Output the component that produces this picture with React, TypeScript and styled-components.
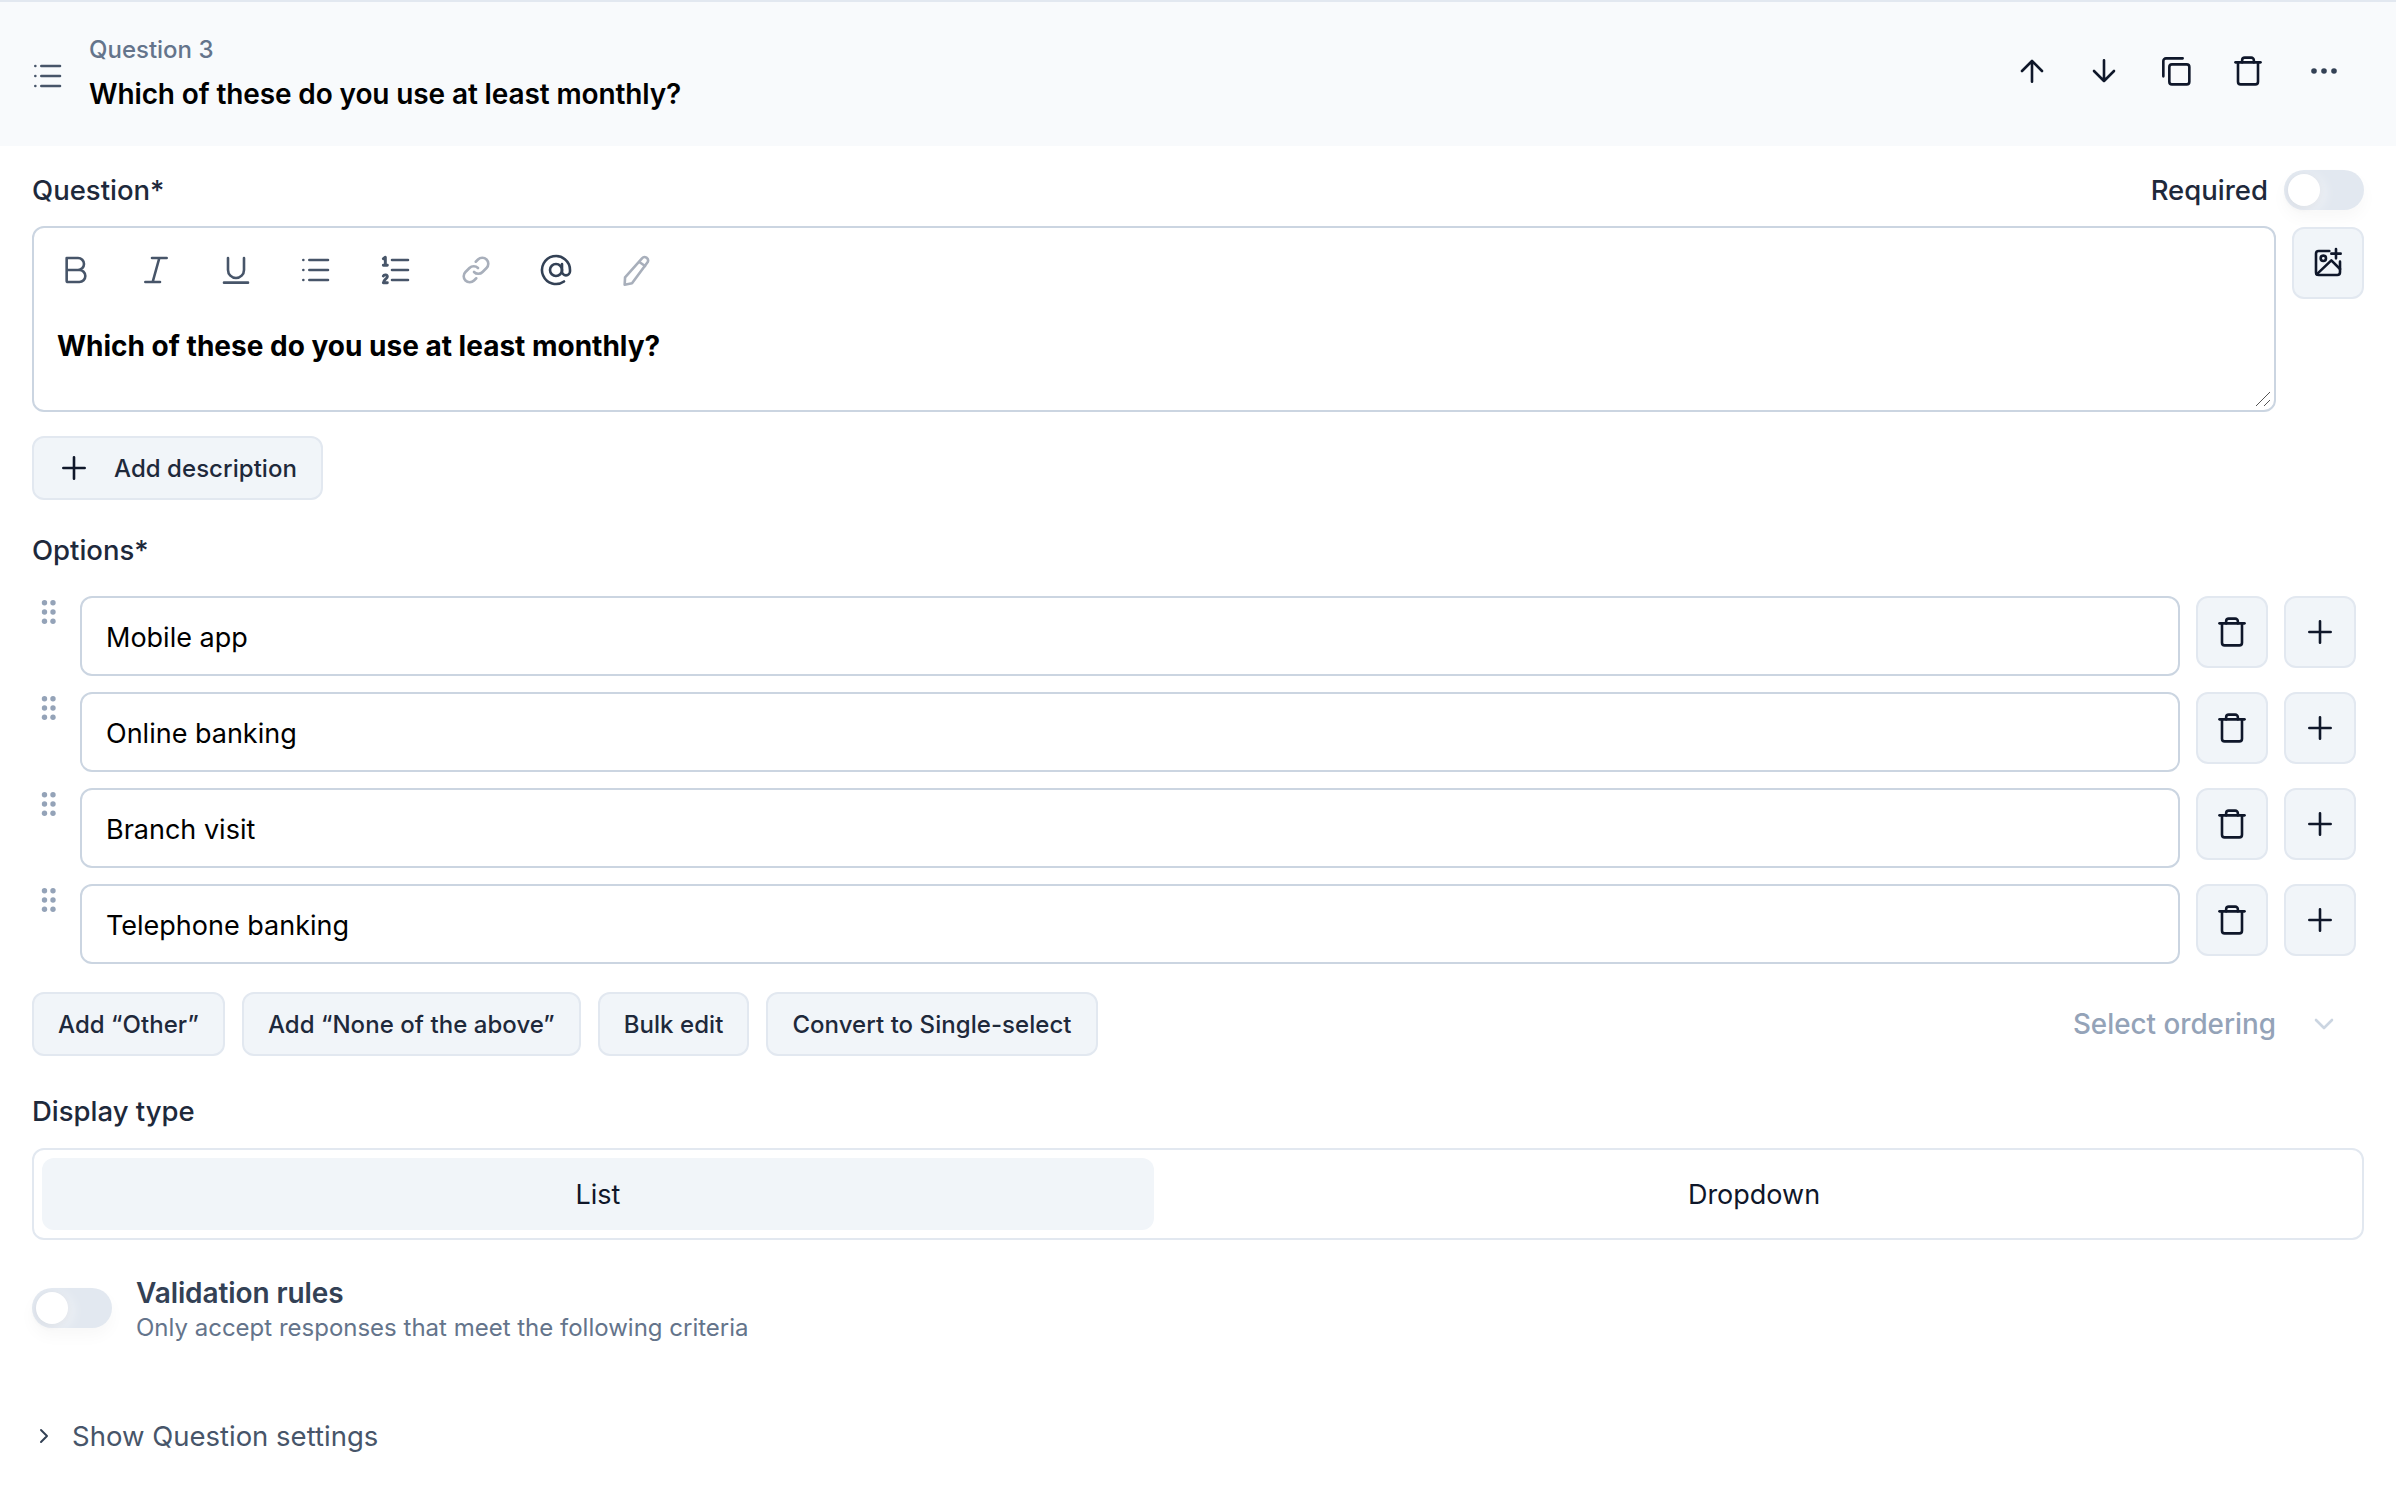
import React from "react";
import styled, { createGlobalStyle } from "styled-components";

const GlobalStyle = createGlobalStyle`
  html, body {
    margin: 0;
    background: #ffffff;
    font-family: Inter, "Noto Sans", sans-serif;
    -webkit-font-smoothing: antialiased;
  }
  * { box-sizing: border-box; }
`;

type IconProps = { color?: string; size?: number };

const Icon = ({ color = "#0f172a", size = 32, children }: IconProps & { children: React.ReactNode }) => (
  <svg
    width={size}
    height={size}
    viewBox="0 0 24 24"
    fill="none"
    stroke={color}
    strokeWidth="1.95"
    strokeLinecap="round"
    strokeLinejoin="round"
  >
    {children}
  </svg>
);

const TrashIcon = (p: IconProps) => (
  <Icon {...p}>
    <path d="M2.600 5.500h18.800" />
    <path d="M7.600 5.500V4a2 2 0 0 1 2-2h4.800a2 2 0 0 1 2 2v1.500" />
    <path d="M4.500 5.500V20a2 2 0 0 0 2 2h11a2 2 0 0 0 2-2V5.500" />
  </Icon>
);
const PlusIcon = (p: IconProps) => (
  <Icon {...p}>
    <path d="M12 4v16M4 12h16" />
  </Icon>
);
const UpIcon = (p: IconProps) => (
  <Icon {...p}>
    <path d="M12 20V4.500M4.500 12 12 4.500l7.500 7.500" />
  </Icon>
);
const DownIcon = (p: IconProps) => (
  <Icon {...p}>
    <path d="M12 4v15.500M4.500 12l7.500 7.500 7.500-7.500" />
  </Icon>
);
const CopyIcon = (p: IconProps) => (
  <Icon {...p}>
    <rect x="7" y="7" width="15" height="15" rx="2" />
    <path d="M17 2.500H4.500a2 2 0 0 0-2 2V16" />
  </Icon>
);
const ListIcon = ({ color = "#475569", size = 32 }: IconProps) => (
  <Icon color={color} size={size}>
    <path d="M7 4.500h14M7 12h14M7 19.500h14" />
    <path d="M2.500 4.500h.01M2.500 12h.01M2.500 19.500h.01" />
  </Icon>
);
const NumberedIcon = (p: IconProps) => (
  <Icon {...p}>
    <path d="M9 4.500h12M9 12h12M9 19.500h12" />
    <path d="M2.500 3.500 4 2.500v6M2.500 8.500H5.500" strokeWidth="2.200" />
    <path d="M2.500 16.500c.5-1.200 3-1.200 3 .5 0 1.300-3 2.500-3 4.500h3" strokeWidth="2.200" />
  </Icon>
);
const BoldIcon = (p: IconProps) => (
  <Icon {...p}>
    <path d="M5 3h8.500a4.500 4.500 0 0 1 0 9H5zM5 12h9.500a4.500 4.500 0 0 1 0 9H6a1 1 0 0 1-1-1z" />
  </Icon>
);
const ItalicIcon = (p: IconProps) => (
  <Icon {...p}>
    <path d="M9 3h11M4 21h11M14.500 3 9.500 21" />
  </Icon>
);
const UnderlineIcon = (p: IconProps) => (
  <Icon {...p}>
    <path d="M6 3v9a6 6 0 0 0 12 0V3M3 21.500h18" />
  </Icon>
);
const LinkIcon = (p: IconProps) => (
  <Icon {...p}>
    <path d="M10.500 13.500a4.500 4.500 0 0 0 6.400 0l3-3a4.500 4.500 0 0 0-6.400-6.400l-1.700 1.700" />
    <path d="M13.500 10.500a4.500 4.500 0 0 0-6.400 0l-3 3a4.500 4.500 0 0 0 6.400 6.400l1.700-1.700" />
  </Icon>
);
const AtIcon = (p: IconProps) => (
  <Icon {...p}>
    <circle cx="12" cy="12" r="4.500" />
    <path d="M16.500 7.500V13a3 3 0 0 0 6 0v-1a10.500 10.500 0 1 0-4.500 8.600" />
  </Icon>
);
const PencilIcon = (p: IconProps) => (
  <Icon {...p}>
    <path d="M16.500 3.200a2.600 2.600 0 0 1 4.300 2.800L9 22l-5.500 1 .3-5.500z" />
    <path d="m14.500 6 4.300 3" />
  </Icon>
);
const ImagePlusIcon = (p: IconProps) => (
  <Icon {...p}>
    <path d="M13 3H5a2 2 0 0 0-2 2v14a2 2 0 0 0 2 2h14a2 2 0 0 0 2-2v-8" />
    <circle cx="8.500" cy="8.500" r="2" />
    <path d="m3.500 20.500 11-10.500 6.500 6.500M18 1.500v7M14.500 5h7" />
  </Icon>
);
const ChevronDownIcon = () => (
  <Icon color="#cbd5e1">
    <path d="m6 9 6 6 6-6" />
  </Icon>
);
const ChevronRightIcon = () => (
  <Icon color="#334155" size={24}>
    <path d="m9 6 6 6-6 6" />
  </Icon>
);
const MoreIcon = () => (
  <svg width="32" height="32" viewBox="0 0 32 32" fill="#334155">
    <circle cx="6" cy="16" r="2.800" />
    <circle cx="16" cy="16" r="2.800" />
    <circle cx="26" cy="16" r="2.800" />
  </svg>
);
const DragIcon = () => (
  <svg width="16" height="24" viewBox="0 0 16 24" fill="#94a3b8">
    {[2.7, 12, 21.3].map((y) => (
      <React.Fragment key={y}>
        <circle cx="3.500" cy={y} r="2.700" />
        <circle cx="12" cy={y} r="2.700" />
      </React.Fragment>
    ))}
  </svg>
);

const Page = styled.div`
  width: 2396px;
  min-height: 1488px;
  background: #fff;
`;

const Header = styled.header`
  display: flex;
  align-items: center;
  height: 146px;
  padding: 0 56px 0 32px;
  background: #f8fafc;
  border-top: 2px solid #e2e8f0;
`;

const HeaderHandle = styled.div`
  display: flex;
  width: 57px;
  padding-top: 4px;
`;

const HeaderTitles = styled.div`
  flex: 1;
  display: flex;
  flex-direction: column;
  gap: 12px;
  padding-bottom: 4px;
`;

const QuestionNumber = styled.div`
  font-size: 24px;
  line-height: 32px;
  font-weight: 500;
  color: #64748b;
`;

const QuestionTitle = styled.div`
  font-size: 28px;
  line-height: 32px;
  font-weight: 600;
  letter-spacing: -0.12px;
  color: #000;
`;

const HeaderActions = styled.div`
  display: flex;
  align-items: center;
  gap: 40px;
  padding-bottom: 6px;
`;

const BareIcon = styled.span<{ $shift?: number }>`
  display: flex;
  margin-left: ${(p) => p.$shift ?? 0}px;
`;

const Body = styled.main`
  padding: 24px 32px 0;
`;

const LabelRow = styled.div`
  display: flex;
  align-items: center;
  justify-content: space-between;
  height: 40px;
`;

const Label = styled.div`
  font-size: 27.5px;
  line-height: 40px;
  font-weight: 500;
  color: #1e293b;
`;

const RequiredGroup = styled.div`
  display: flex;
  align-items: center;
  gap: 16px;
`;

const ToggleTrack = styled.div`
  position: relative;
  flex: none;
  width: 80px;
  height: 40px;
  border-radius: 20px;
  background: #e2e8f0;
  box-shadow: 0 8px 16px rgba(15, 23, 42, 0.03);
`;

const ToggleThumb = styled.div`
  position: absolute;
  top: 4px;
  left: 4px;
  width: 32px;
  height: 32px;
  border-radius: 50%;
  background: #fff;
  box-shadow: 4px 3px 14px rgba(255, 255, 255, 0.6), 0 2px 6px rgba(15, 23, 42, 0.1);
`;

const EditorRow = styled.div`
  display: grid;
  grid-template-columns: 2244px 72px;
  gap: 16px;
  margin-top: 16px;
  align-items: start;
`;

const Editor = styled.div`
  position: relative;
  height: 186px;
  padding: 28px 0 0 23px;
  background: #fff;
  border: 2px solid #cbd5e1;
  border-radius: 12px;
`;

const Toolbar = styled.div`
  display: flex;
  align-items: center;
  gap: 48px;
  height: 28px;
  margin-left: 3px;
`;

const EditorText = styled.div`
  margin-top: 44px;
  font-size: 28px;
  line-height: 36px;
  font-weight: 700;
  color: #000;
`;

const ResizeGrip = styled.svg`
  position: absolute;
  right: 3px;
  bottom: 3px;
`;

const IconButton = styled.button`
  display: flex;
  align-items: center;
  justify-content: center;
  width: 72px;
  height: 72px;
  padding: 0;
  background: #f1f5f9;
  border: 2px solid #e2e8f0;
  border-radius: 12px;
`;

const ImageButton = styled(IconButton)`
  margin-top: 1px;
`;

const TextButton = styled.button<{ $gap?: number }>`
  display: inline-flex;
  align-items: center;
  gap: ${(p) => p.$gap ?? 0}px;
  height: 64px;
  padding: 0 24px;
  background: #f1f5f9;
  border: 2px solid #e2e8f0;
  border-radius: 12px;
  font-family: inherit;
  font-size: 24px;
  font-weight: 500;
  letter-spacing: 0.05px;
  color: #1e293b;
  white-space: nowrap;
`;

const DescriptionRow = styled.div`
  display: flex;
  margin-top: 24px;
`;

const OptionsLabel = styled(Label)`
  margin-top: 30px;
`;

const OptionList = styled.div`
  display: flex;
  flex-direction: column;
  gap: 16px;
  margin-top: 26px;
`;

const OptionRow = styled.div`
  display: flex;
  align-items: flex-start;
  height: 80px;
  padding-right: 8px;
`;

const OptionHandle = styled.div`
  display: flex;
  flex: none;
  width: 48px;
  padding: 4px 0 0 9px;
`;

const OptionInput = styled.div`
  flex: 1;
  height: 80px;
  margin-right: 16px;
  padding: 3px 24px 0;
  display: flex;
  align-items: center;
  background: #fff;
  border: 2px solid #cbd5e1;
  border-radius: 12px;
  font-size: 27px;
  color: #000;
`;

const OptionButtons = styled.div`
  display: flex;
  gap: 16px;
`;

const ActionsRow = styled.div`
  display: flex;
  align-items: center;
  gap: 17px;
  margin-top: 28px;
`;

const SelectOrdering = styled.div`
  margin-left: auto;
  display: flex;
  align-items: center;
  gap: 32px;
  padding-right: 24px;
  font-size: 27.8px;
  font-weight: 500;
  color: #94a3b8;
`;

const DisplayLabel = styled(Label)`
  margin-top: 35px;
`;

const Segments = styled.div`
  display: grid;
  grid-template-columns: 1112px 1fr;
  height: 92px;
  margin-top: 17px;
  padding: 8px;
  background: #fff;
  border: 2px solid #e2e8f0;
  border-radius: 12px;
`;

const Segment = styled.div<{ $active?: boolean }>`
  display: flex;
  align-items: center;
  justify-content: center;
  border-radius: 12px;
  background: ${(p) => (p.$active ? "#f1f5f9" : "transparent")};
  font-size: 27px;
  color: #0f172a;
`;

const ValidationRow = styled.div`
  display: flex;
  align-items: flex-start;
  gap: 24px;
  margin-top: 48px;
`;

const ValidationTexts = styled.div`
  display: flex;
  flex-direction: column;
  margin-top: -13px;
`;

const ValidationTitle = styled.div`
  font-size: 28px;
  line-height: 36px;
  font-weight: 600;
  letter-spacing: -0.1px;
  color: #334155;
`;

const ValidationHint = styled.div`
  font-size: 24px;
  line-height: 34px;
  color: #64748b;
`;

const SettingsToggle = styled.div`
  display: flex;
  align-items: center;
  gap: 16px;
  margin-top: 71px;
  font-size: 27.5px;
  line-height: 40px;
  color: #475569;
`;

const options = ["Mobile app", "Online banking", "Branch visit", "Telephone banking"];

export default function App() {
  return (
    <Page>
      <GlobalStyle />
      <Header>
        <HeaderHandle>
          <ListIcon />
        </HeaderHandle>
        <HeaderTitles>
          <QuestionNumber>Question 3</QuestionNumber>
          <QuestionTitle>Which of these do you use at least monthly?</QuestionTitle>
        </HeaderTitles>
        <HeaderActions>
          <BareIcon><UpIcon /></BareIcon>
          <BareIcon><DownIcon /></BareIcon>
          <BareIcon><CopyIcon /></BareIcon>
          <BareIcon><TrashIcon /></BareIcon>
          <BareIcon $shift={4}><MoreIcon /></BareIcon>
        </HeaderActions>
      </Header>

      <Body>
        <LabelRow>
          <Label>Question*</Label>
          <RequiredGroup>
            <Label>Required</Label>
            <ToggleTrack><ToggleThumb /></ToggleTrack>
          </RequiredGroup>
        </LabelRow>

        <EditorRow>
          <Editor>
            <Toolbar>
              <BoldIcon color="#475569" />
              <ItalicIcon color="#475569" />
              <UnderlineIcon color="#475569" />
              <ListIcon />
              <NumberedIcon color="#475569" />
              <LinkIcon color="#a8afbb" />
              <AtIcon color="#334155" />
              <PencilIcon color="#a8afbb" />
            </Toolbar>
            <EditorText>Which of these do you use at least monthly?</EditorText>
            <ResizeGrip width="16" height="16" viewBox="0 0 16 16" stroke="#555" strokeWidth="1">
              <path d="M1 15 15 1M9 15l6-6" />
            </ResizeGrip>
          </Editor>
          <ImageButton><ImagePlusIcon /></ImageButton>
        </EditorRow>

        <DescriptionRow>
          <TextButton $gap={24}>
            <PlusIcon />
            Add description
          </TextButton>
        </DescriptionRow>

        <OptionsLabel>Options*</OptionsLabel>
        <OptionList>
          {options.map((option) => (
            <OptionRow key={option}>
              <OptionHandle><DragIcon /></OptionHandle>
              <OptionInput>{option}</OptionInput>
              <OptionButtons>
                <IconButton><TrashIcon /></IconButton>
                <IconButton><PlusIcon /></IconButton>
              </OptionButtons>
            </OptionRow>
          ))}
        </OptionList>

        <ActionsRow>
          <TextButton>Add “Other”</TextButton>
          <TextButton>Add “None of the above”</TextButton>
          <TextButton>Bulk edit</TextButton>
          <TextButton>Convert to Single-select</TextButton>
          <SelectOrdering>
            Select ordering
            <ChevronDownIcon />
          </SelectOrdering>
        </ActionsRow>

        <DisplayLabel>Display type</DisplayLabel>
        <Segments>
          <Segment $active>List</Segment>
          <Segment>Dropdown</Segment>
        </Segments>

        <ValidationRow>
          <ToggleTrack><ToggleThumb /></ToggleTrack>
          <ValidationTexts>
            <ValidationTitle>Validation rules</ValidationTitle>
            <ValidationHint>Only accept responses that meet the following criteria</ValidationHint>
          </ValidationTexts>
        </ValidationRow>

        <SettingsToggle>
          <ChevronRightIcon />
          Show Question settings
        </SettingsToggle>
      </Body>
    </Page>
  );
}
